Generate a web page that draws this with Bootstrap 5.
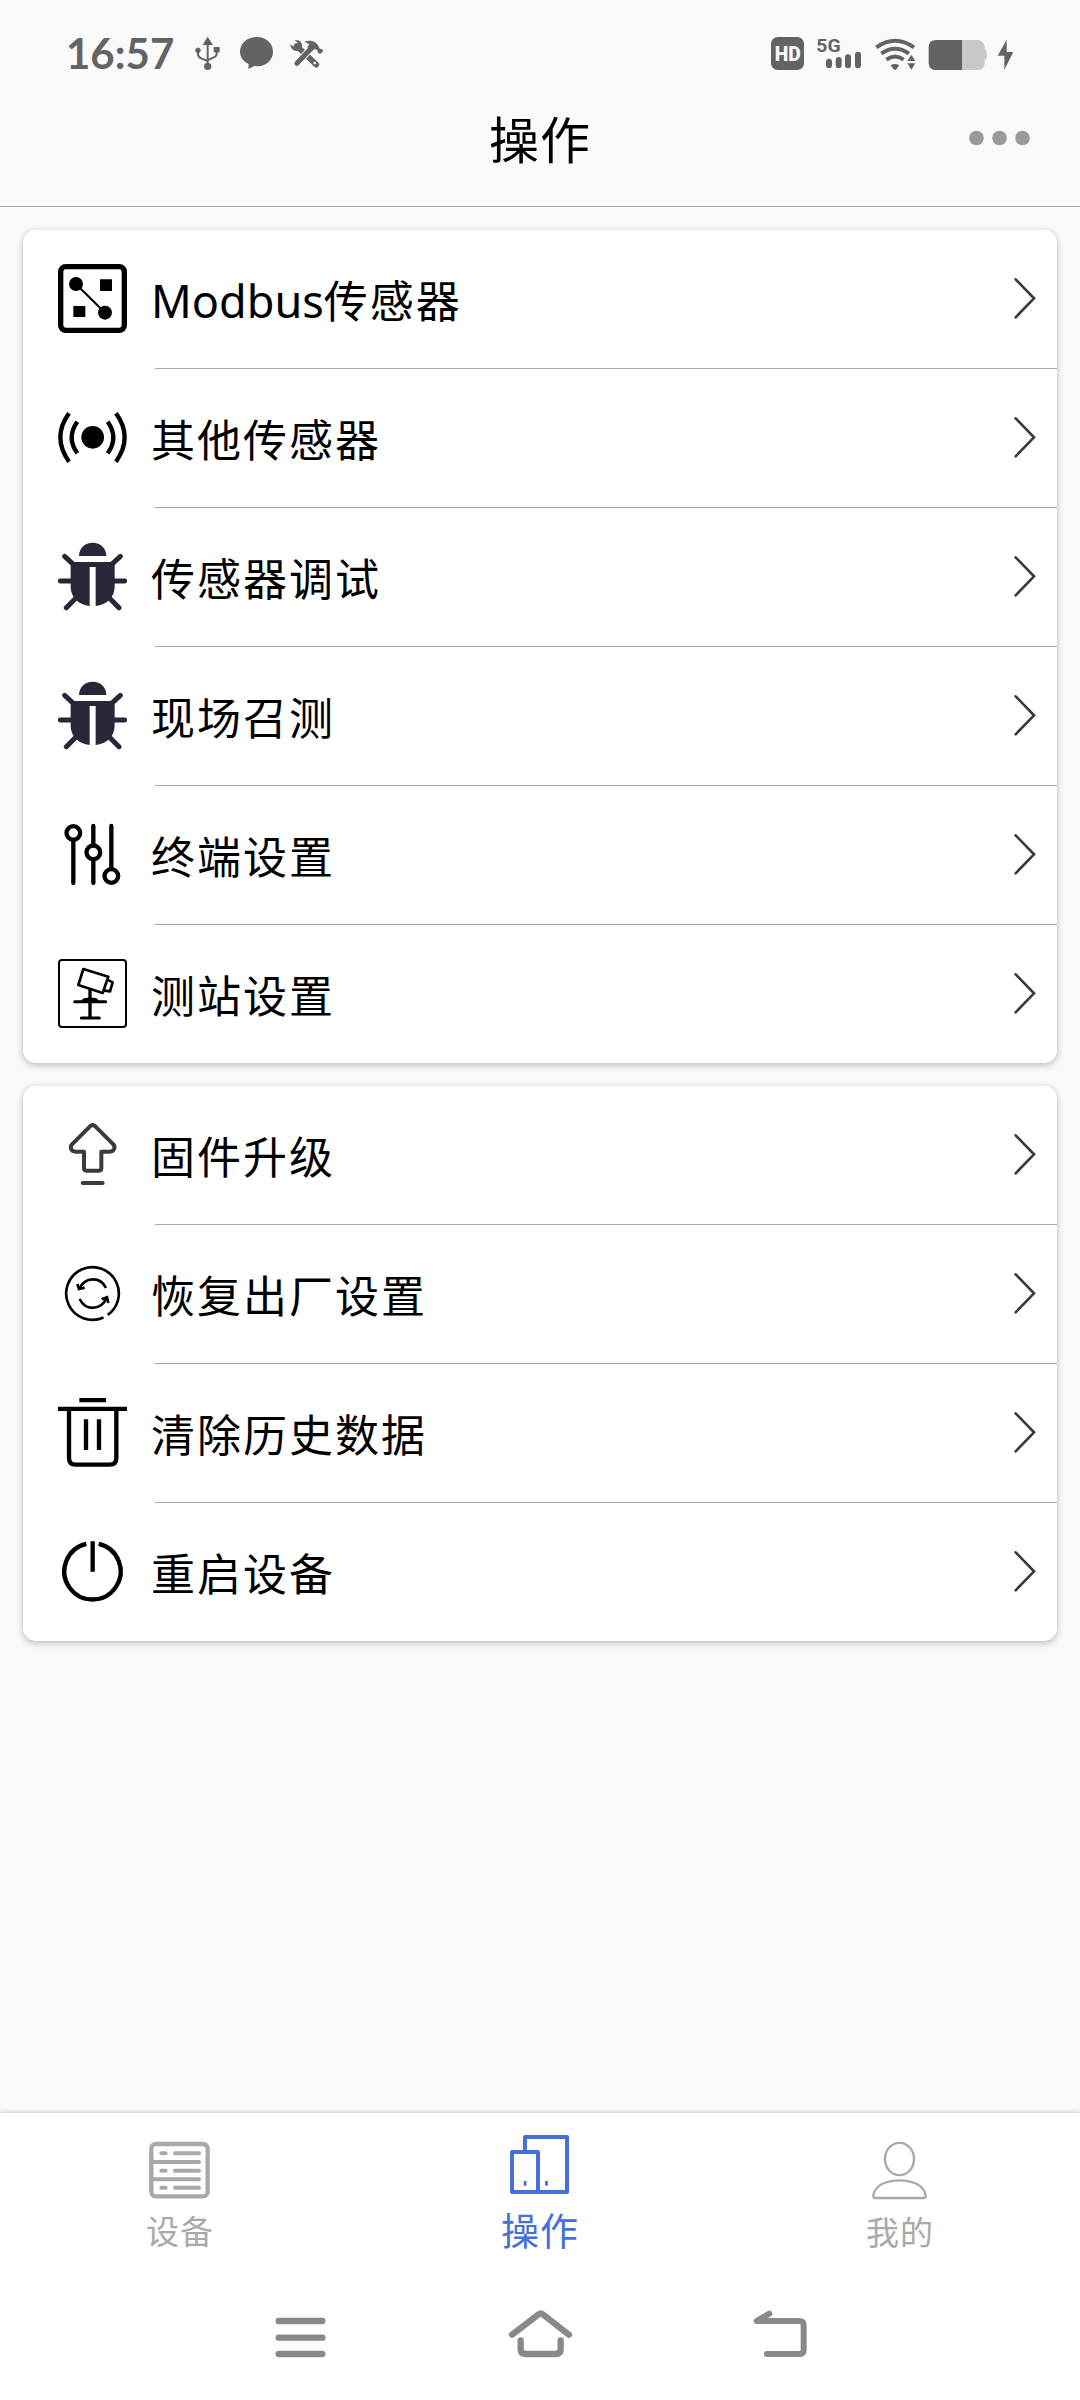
<!DOCTYPE html>
<html lang="zh-CN">
<head>
<meta charset="utf-8">
<meta name="viewport" content="width=device-width, initial-scale=1">
<title>操作</title>
<link href="https://cdn.jsdelivr.net/npm/bootstrap@5.3.0/dist/css/bootstrap.min.css" rel="stylesheet">
<style>
  body { background: #fafafa; color: #000; font-family: "Noto Sans CJK SC", "Noto Sans", sans-serif; }
  .screen { width: 1080px; height: 2400px; overflow: hidden; }
  svg { display: block; flex: none; overflow: visible; }
  .status-bar { height: 93px; padding: 36px 66px 0 66px; color: #636363; }
  .status-bar svg { height: 35px; }
  .clock { font: 700 42px/35px Lato, sans-serif; width: 129px; letter-spacing: 0; }
  .title-bar { height: 114px; border-bottom: 1px solid #a8a8a8; }
  .title-bar h1 { font-size: 50px; line-height: 88px; letter-spacing: 1px; font-weight: 400; }
  .more-btn { right: 50px; top: 37px; }
  .menu-card { border-radius: 13px; margin: 0 23px 23px; box-shadow: 0 2px 7px rgba(0,0,0,.27); }
  .menu-row { height: 139px; padding-left: 35px; }
  .menu-row:last-child { height: 138px; }
  .menu-icon { width: 69px; height: 69px; margin-top: 34px; }
  .menu-body { margin-left: 28px; border-bottom: 1px solid #a8a8a8; }
  .menu-row:last-child .menu-body { border-bottom: 0; }
  .menu-label { font-size: 44px; letter-spacing: 2px; line-height: 64px; margin: 37px 0 0 -4px; }
  .latin { font-family: "Noto Sans", sans-serif; font-size: 45px; letter-spacing: 0; }
  .chev { width: 22px; height: 42px; margin: 47px 21px 0 0; }
  .tab-bar { height: 167px; box-shadow: 0 -1px 4px rgba(0,0,0,.2); }
  .tab-link { color: #a9a9a9; font-size: 33px; letter-spacing: 1px; width: 360px; line-height: 46px; padding-top: 28px; }
  .tab-link.active { color: #456fd9; font-size: 38px; padding-top: 21px; }
  .tab-link span { margin-top: 8px; }
  .tab-link.active span { margin-top: 11px; }
  .sys-nav { height: 120px; padding: 29px 180px 0; color: #898989; }
  .sys-nav > div { width: 240px; }
</style>
<script src="https://cdn.jsdelivr.net/npm/bootstrap@5.3.0/dist/js/bootstrap.bundle.min.js"></script>
</head>
<body>
<svg width="0" height="0" class="position-absolute" aria-hidden="true">
  <symbol id="bug" viewBox="174 126 207 207">
    <g fill="#292638"><path d="M237 168C237 144 255 128 278 128S319 144 319 168Z"/>
    <path d="M212 186H344V260C344 292 320 314 287 318V201H269V318C236 314 212 292 212 260Z"/></g>
    <path d="M194 169 220 193M361 169 335 193M181 243H215M374 243H340M199 323 225 297M357 323 331 297" stroke="#292638" stroke-width="15" stroke-linecap="round" fill="none"/>
  </symbol>
  <symbol id="chevron" viewBox="222 231 66 126">
    <path d="M227 238 282 295 227 352" fill="none" stroke="#3a3a3a" stroke-width="8" stroke-linecap="round"/>
  </symbol>
</svg>
<div class="screen d-flex flex-column">
  <div class="status-bar d-flex align-items-start">
    <div class="clock">16:57</div>
    <svg width="26" viewBox="464 48 78 105"><g fill="currentColor"><path d="M502 50 518 75H487Z"/><circle cx="502" cy="139" r="11"/><circle cx="473" cy="91" r="8"/><path d="M520 81H538V97H520Z"/></g><path d="M502 70V135M473 91V104Q474 112 484 116L502 123M529 91V102Q528 110 519 113L502 120" fill="none" stroke="currentColor" stroke-width="6"/></svg>
    <svg width="35" viewBox="597 48 105 105" style="margin-left:18px"><path d="M650 51C678 51 699 70 699 95S678 139 651 139L643 138 625 147 626 132C610 124 600 111 600 95 600 70 622 51 650 51Z" fill="currentColor"/></svg>
    <svg width="35" viewBox="747 48 105 105" style="margin-left:15px">
      <path d="M770 78 829 134" stroke="currentColor" stroke-width="17" stroke-linecap="round"/>
      <path d="M764 60 774 69 772 78 763 81 751 73C751 86 762 97 776 92L786 83C789 69 779 58 764 60Z" fill="currentColor"/>
      <path d="M771 130 818 80" stroke="#fafafa" stroke-width="21"/>
      <path d="M771 130 818 80" stroke="currentColor" stroke-width="15" stroke-linecap="round"/>
      <path d="M793 65C809 59 827 62 836 79L839 86 848 88 849 94 841 102 834 98 832 90 822 87 815 94 802 81 808 73Z" fill="currentColor"/>
      <circle cx="824" cy="129" r="4" fill="#fafafa"/>
    </svg>
    <svg class="ms-auto" width="35" viewBox="60 48 105 105"><rect x="63" y="51" width="99" height="99" rx="20" fill="currentColor"/><text x="113" y="122" text-anchor="middle" font-family="Roboto" font-weight="900" font-size="61" textLength="78" lengthAdjust="spacingAndGlyphs" fill="#fafafa">HD</text></svg>
    <svg width="46" viewBox="198 48 138 105" style="margin-left:11px"><text x="199" y="96" font-family="Roboto" font-weight="700" font-size="57" textLength="73" lengthAdjust="spacingAndGlyphs" fill="currentColor">5G</text><path d="M237 125V136M266 120V136M294 112V136M324 104V136" stroke="currentColor" stroke-width="18" stroke-linecap="round"/></svg>
    <svg width="41" viewBox="375 48 123 105" style="margin-left:13px"><g fill="none" stroke="currentColor" stroke-width="12"><path d="M379 82Q435 42 492 82"/><path d="M394 101Q435 72 477 101"/><path d="M409 119Q435 100 461 119"/></g><path d="M422 136Q435 128 448 136L439 148Q435 152 431 148Z" fill="currentColor"/><path d="M484 99 499 125V152H470V125Z" fill="#fafafa"/><path d="M484 104 496 123H472ZM484 149 496 130H472Z" fill="currentColor"/></svg>
    <svg width="60" viewBox="534 48 180 105" style="margin-left:12px"><path d="M634 60H682Q701 60 704 80V86Q711 89 711 105T704 120V131Q701 150 682 150H634Z" fill="#c9c9c9"/><path d="M636 60H558Q536 60 536 82V128Q536 150 558 150H636Z" fill="currentColor"/></svg>
    <svg width="17" viewBox="741 48 51 105" style="margin-left:9px"><path d="M770 59 743 107H763L763 149 790 96H770Z" fill="currentColor"/></svg>
  </div>
  <header class="title-bar position-relative text-center">
    <h1 class="m-0">操作</h1>
    <svg class="more-btn position-absolute" width="61" height="16" viewBox="0 0 61 16" fill="#999"><circle cx="7.5" cy="8" r="7.3"/><circle cx="30.5" cy="8" r="7.3"/><circle cx="53.5" cy="8" r="7.3"/></svg>
  </header>
  <main class="flex-grow-1" style="padding-top:23px">
    <section class="menu-card bg-white">
      <div class="menu-row d-flex">
        <svg class="menu-icon" viewBox="174 252 207 207"><rect x="182" y="260" width="191" height="191" rx="15" fill="none" stroke="#000" stroke-width="16"/><circle cx="228" cy="312" r="21"/><circle cx="315" cy="398" r="21"/><path d="M300 298H336V333H300ZM220 378H256V411H220Z"/><path d="M228 312 315 398" stroke="#000" stroke-width="6"/></svg>
        <div class="menu-body flex-grow-1 d-flex justify-content-between"><span class="menu-label"><span class="latin">Modbus</span>传感器</span><svg class="chev"><use href="#chevron"/></svg></div>
      </div>
      <div class="menu-row d-flex">
        <svg class="menu-icon" viewBox="174 669 207 207"><circle cx="278" cy="772" r="34"/><g fill="none" stroke="#000" stroke-width="13"><path d="M207 700Q155 772 207 845"/><path d="M348 700Q400 772 348 845"/><path d="M232 725Q198 772 232 820"/><path d="M323 725Q357 772 323 820"/></g></svg>
        <div class="menu-body flex-grow-1 d-flex justify-content-between"><span class="menu-label">其他传感器</span><svg class="chev"><use href="#chevron"/></svg></div>
      </div>
      <div class="menu-row d-flex">
        <svg class="menu-icon"><use href="#bug"/></svg>
        <div class="menu-body flex-grow-1 d-flex justify-content-between"><span class="menu-label">传感器调试</span><svg class="chev"><use href="#chevron"/></svg></div>
      </div>
      <div class="menu-row d-flex">
        <svg class="menu-icon"><use href="#bug"/></svg>
        <div class="menu-body flex-grow-1 d-flex justify-content-between"><span class="menu-label">现场召测</span><svg class="chev"><use href="#chevron"/></svg></div>
      </div>
      <div class="menu-row d-flex">
        <svg class="menu-icon" viewBox="174 90 207 207"><g fill="none" stroke="#000" stroke-width="13" stroke-linecap="round"><circle cx="220" cy="129" r="20.5"/><circle cx="280" cy="187" r="20.5"/><circle cx="334" cy="258" r="20.5"/><path d="M220 150V279M280 108V166M280 208V279M334 108V237"/></g></svg>
        <div class="menu-body flex-grow-1 d-flex justify-content-between"><span class="menu-label">终端设置</span><svg class="chev"><use href="#chevron"/></svg></div>
      </div>
      <div class="menu-row d-flex">
        <svg class="menu-icon" viewBox="174 507 207 207"><g fill="none" stroke="#000" stroke-linejoin="round" stroke-linecap="round"><rect x="177" y="510" width="201" height="201" rx="9" stroke-width="6"/><path d="M250 537 325 560 308 609 235 585ZM326 571 338 577 330 604 315 602" stroke-width="8"/><path d="M270 600V682" stroke-width="10"/><path d="M224 635H317M244 684H298" stroke-width="9"/></g><path d="M243 633Q248 623 262 623H280Q293 623 297 633Z"/></svg>
        <div class="menu-body flex-grow-1 d-flex justify-content-between"><span class="menu-label">测站设置</span><svg class="chev"><use href="#chevron"/></svg></div>
      </div>
    </section>
    <section class="menu-card bg-white">
      <div class="menu-row d-flex">
        <svg class="menu-icon" viewBox="174 120 207 207"><g fill="none" stroke="#3b3b3b" stroke-width="12" stroke-linejoin="round" stroke-linecap="round"><path d="M270 139Q278 132 286 139L340 193Q346 200 342 208 339 215 329 215H304V265Q304 272 297 272H259Q252 272 252 265V215H226Q217 215 214 208 210 200 216 193Z"/><path d="M248 309H308"/></g></svg>
        <div class="menu-body flex-grow-1 d-flex justify-content-between"><span class="menu-label">固件升级</span><svg class="chev"><use href="#chevron"/></svg></div>
      </div>
      <div class="menu-row d-flex">
        <svg class="menu-icon" viewBox="174 537 207 207"><g fill="none" stroke="#000" stroke-width="8"><circle cx="277.5" cy="640.5" r="79" stroke-dasharray="478 100" transform="rotate(65.3 277.5 640.5)"/><path d="M318 624C302 590 255 588 238 627M239 657C256 692 303 694 321 652"/><path d="M232 612 237 627 254 623M305 658 321 652 325 669" stroke-width="8"/></g></svg>
        <div class="menu-body flex-grow-1 d-flex justify-content-between"><span class="menu-label">恢复出厂设置</span><svg class="chev"><use href="#chevron"/></svg></div>
      </div>
      <div class="menu-row d-flex">
        <svg class="menu-icon" viewBox="174 114 207 207"><g fill="none" stroke="#000" stroke-width="13"><path d="M238 120.500H318M174 146.500H381M258 178V270M297 178V270"/><path d="M207 147V294Q207 314 227 314H329Q349 314 349 294V147"/></g></svg>
        <div class="menu-body flex-grow-1 d-flex justify-content-between"><span class="menu-label">清除历史数据</span><svg class="chev"><use href="#chevron"/></svg></div>
      </div>
      <div class="menu-row d-flex">
        <svg class="menu-icon" viewBox="174 531 207 207"><path d="M278 544V635M259 551.500A84.500 84.500 0 1 0 296 551.500" fill="none" stroke="#000" stroke-width="13"/></svg>
        <div class="menu-body flex-grow-1 d-flex justify-content-between"><span class="menu-label">重启设备</span><svg class="chev"><use href="#chevron"/></svg></div>
      </div>
    </section>
  </main>
  <nav class="tab-bar d-flex bg-white">
    <a class="tab-link d-flex flex-column align-items-center text-decoration-none" href="#">
      <svg width="62" height="58" viewBox="147 153 186 174" fill="none" stroke="currentColor" stroke-width="12" stroke-linecap="round"><rect x="154" y="162" width="169" height="157" rx="14" stroke-width="13"/><path d="M184 190H197M225 190H297M160 216H297M184 242H197M225 242H297M160 268H297M184 293H197M225 293H297"/></svg>
      <span>设备</span></a>
    <a class="tab-link active d-flex flex-column align-items-center text-decoration-none" href="#">
      <svg width="62" height="61" viewBox="1227 132 186 183" fill="none" stroke="currentColor" stroke-width="12" stroke-linejoin="round"><path d="M1275 184V141H1401V306H1314"/><rect x="1236" y="186" width="78" height="120"/><path d="M1275.500 273V287M1339.500 273V287" stroke-width="8"/></svg>
      <span>操作</span></a>
    <a class="tab-link d-flex flex-column align-items-center text-decoration-none" href="#">
      <svg width="60" height="59" viewBox="1170 153 180 177" fill="none" stroke="currentColor" stroke-width="7"><ellipse cx="1258.500" cy="207" rx="43.500" ry="48.500"/><path d="M1180 317C1184 285 1219 271 1258 271S1333 285 1337 317Q1338 324 1331 324H1186Q1179 324 1180 317Z"/></svg>
      <span>我的</span></a>
  </nav>
  <div class="sys-nav d-flex bg-white position-relative">
    <div class="d-flex justify-content-center"><svg width="52" height="49" viewBox="522 657 156 147" fill="none" stroke="currentColor" stroke-width="19" stroke-linecap="round"><path d="M536 693H667M536 743H667M536 792H667"/></svg></div>
    <div class="d-flex justify-content-center"><svg width="64" height="49" viewBox="1224 657 192 147" fill="none" stroke="currentColor" stroke-width="19" stroke-linecap="round" stroke-linejoin="round"><path d="M1236 734 1316 673Q1322 668 1328 673L1407 734"/><path d="M1262 751V777Q1262 792 1277 792H1367Q1382 792 1382 777V751"/></svg></div>
    <div class="d-flex justify-content-center"><svg width="54" height="49" viewBox="819 657 162 147" fill="none" stroke="currentColor" stroke-width="18" stroke-linecap="round" stroke-linejoin="round"><path d="M868 671 830 693H958Q971 693 971 706V779Q971 792 958 792H861"/></svg></div>
  </div>
</div>
</body>
</html>
